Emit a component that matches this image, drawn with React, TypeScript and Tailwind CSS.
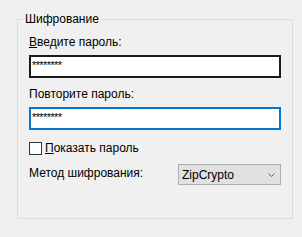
export default function App() {
  const font = { fontFamily: '"Liberation Sans", Arial, sans-serif' };
  return (
    <div
      className="w-[302px] h-[237px] bg-[#f0f0f0] pt-[12px] text-[12px] leading-[15px] text-black"
      style={font}
    >
      <fieldset className="ml-[17px] w-[276px] h-[207px] border border-[#dcdcdc] px-[11px] m-0 min-w-0">
        <legend className="ml-[-5px] px-[1px] leading-[15px]">Шифрование</legend>
        <div className="flex flex-col">
          <div className="mt-[8px] h-[15px]">
            <span className="underline">В</span>ведите пароль:
          </div>
          <div className="mt-[5px] h-[23px] w-[252px] border-2 border-[#1a1a1a] bg-white pl-[1px] pt-[1px] text-[11px] leading-[15px] tracking-[-0.6px]">
            ********
          </div>
          <div className="mt-[9px] h-[15px]">Повторите пароль:</div>
          <div className="mt-[5px] h-[23px] w-[252px] border-2 border-[#0078d7] bg-white pl-[1px] pt-[1px] text-[11px] leading-[15px] tracking-[-0.6px]">
            ********
          </div>
          <div className="mt-[11px] h-[15px] flex items-center">
            <div className="w-[13px] h-[13px] border border-[#333333] bg-white" />
            <span className="ml-[3px]">
              <span className="underline">П</span>оказать пароль
            </span>
          </div>
          <div className="mt-[8px] flex items-start justify-between">
            <div className="mt-[2px]">Метод шифрования:</div>
            <div className="w-[103px] h-[21px] border border-[#adadad] bg-[#e1e1e1] flex items-center justify-between pl-[3px] pr-[5px] pt-[1px]">
              <span>ZipCrypto</span>
              <svg width="7" height="4" viewBox="0 0 7 4" className="mb-[1px]">
                <path d="M0.5 0.5 L3.5 3.5 L6.5 0.5" fill="none" stroke="#606060" strokeWidth="1" />
              </svg>
            </div>
          </div>
        </div>
      </fieldset>
    </div>
  );
}
